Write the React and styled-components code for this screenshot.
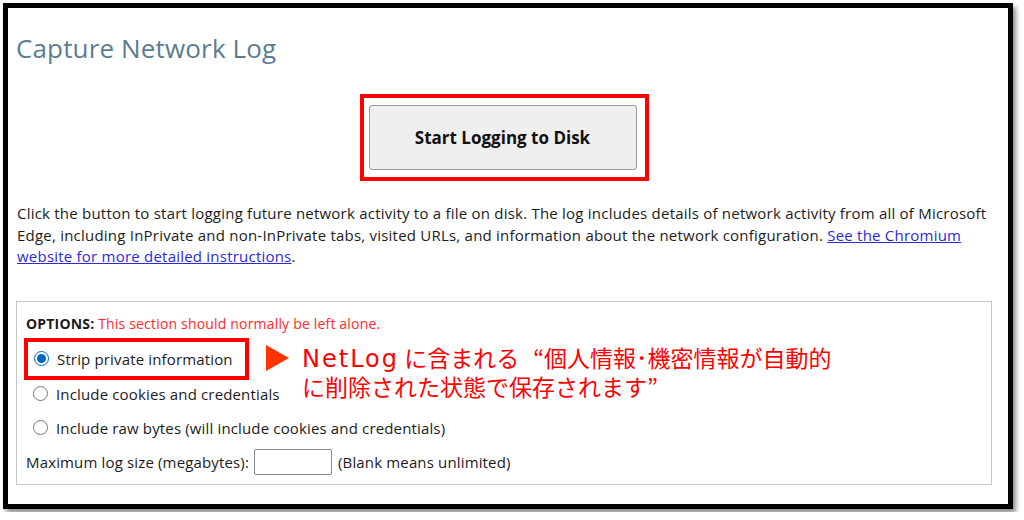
import React from 'react';
import styled, { createGlobalStyle } from 'styled-components';

const GlobalStyle = createGlobalStyle`
  html, body {
    margin: 0;
    padding: 0;
    background: #fff;
  }
  body {
    font-family: "Open Sans", "Noto Sans", "Noto Sans CJK JP", sans-serif;
    color: #1b1b1b;
  }
`;

const Frame = styled.div`
  position: relative;
  box-sizing: border-box;
  margin: 3px;
  width: 1010px;
  height: 506px;
  border: 5px solid #000;
  background: #fff;
  box-shadow: 3px 4px 5px rgba(0, 0, 0, 0.45);
  padding: 0 16px 0 8px;
`;

const Title = styled.h1`
  margin: 23px 0 0 0;
  font-size: 26px;
  line-height: 34px;
  font-weight: 400;
  letter-spacing: 0.15px;
  color: #5b7c93;
`;

const ButtonRow = styled.div`
  display: flex;
  justify-content: center;
  margin-top: 29px;
`;

const Highlight = styled.div`
  display: flex;
  align-items: center;
  box-sizing: border-box;
  border: 4px solid #ff0000;
  padding: ${p => p.pad || '0'};
`;

const BigButton = styled.button`
  width: 268px;
  height: 65px;
  background: #efefef;
  border: 1px solid #9a9a9a;
  border-radius: 3px;
  font-family: "Open Sans", sans-serif;
  font-size: 17px;
  font-weight: 700;
  color: #111;
`;

const Paragraph = styled.p`
  margin: 22px 0 0 1px;
  font-size: 15px;
  line-height: 21.5px;
  letter-spacing: 0.22px;
`;

const Link = styled.a`
  color: #2b2bd9;
  text-decoration: underline;
`;

const Options = styled.div`
  position: relative;
  margin-top: 33px;
  border: 1px solid #c8c8c8;
  height: 184px;
  box-sizing: border-box;
  padding: 12px 9px 0 9px;
`;

const OptionsHead = styled.div`
  font-size: 14px;
  line-height: 20px;
  letter-spacing: 0.18px;
`;

const Strong = styled.b`
  font-weight: 700;
`;

const Warn = styled.span`
  color: #ff2a2a;
`;

const RadioList = styled.div`
  display: flex;
  flex-direction: column;
  margin-top: 4px;
`;

const Row = styled.label`
  display: flex;
  align-items: center;
  gap: 8px;
  height: 34px;
  margin-top: ${p => p.shift || 0}px;
  font-size: 15px;
  letter-spacing: 0.15px;
  box-sizing: border-box;
  padding-left: ${p => (p.boxed ? 0 : 7)}px;
`;

const Radio = styled.input`
  margin: 0;
  width: 15px;
  height: 15px;
  accent-color: #0067c0;
`;

const SizeRow = styled.div`
  display: flex;
  align-items: center;
  gap: 5px;
  height: 34px;
  font-size: 15px;
  letter-spacing: 0.15px;
`;

const SizeInput = styled.input`
  box-sizing: border-box;
  width: 78px;
  height: 26px;
  border: 1px solid #8a8a8a;
  border-radius: 2px;
  margin-right: 1px;
`;

const Note = styled.div`
  position: absolute;
  left: 249px;
  top: 42px;
  display: flex;
  align-items: flex-start;
  gap: 13px;
`;

const Arrow = styled.svg`
  width: 23px;
  height: 26px;
  margin-top: 1px;
`;

const NoteText = styled.div`
  color: #ff0000;
  font-family: "Noto Sans CJK JP", "Noto Sans", sans-serif;
  font-size: 23px;
  line-height: 27px;
  white-space: nowrap;
`;

const Latin = styled.span`
  font-family: "DejaVu Sans", "Noto Sans", sans-serif;
  font-size: 24px;
  letter-spacing: 2px;
`;

const OpenQuote = styled.span`
  margin-left: 14px;
`;

export default function App() {
  return (
    <>
      <GlobalStyle />
      <Frame>
        <Title>Capture Network Log</Title>
        <ButtonRow>
          <Highlight pad="7px 8px 7px 5px">
            <BigButton>Start Logging to Disk</BigButton>
          </Highlight>
        </ButtonRow>
        <Paragraph>
          Click the button to start logging future network activity to a file on disk. The log includes details of
          network activity from all of Microsoft Edge, including InPrivate and non-InPrivate tabs, visited URLs, and
          information about the network configuration.{' '}
          <Link href="#">See the Chromium website for more detailed instructions</Link>.
        </Paragraph>
        <Options>
          <OptionsHead>
            <Strong>OPTIONS:</Strong> <Warn>This section should normally be left alone.</Warn>
          </OptionsHead>
          <RadioList>
            <Highlight pad="0 12px 0 6px" style={{ alignSelf: 'flex-start', marginLeft: -2 }}>
              <Row boxed>
                <Radio type="radio" name="mode" defaultChecked />
                Strip private information
              </Row>
            </Highlight>
            <Row shift={-3}>
              <Radio type="radio" name="mode" />
              Include cookies and credentials
            </Row>
            <Row>
              <Radio type="radio" name="mode" />
              Include raw bytes (will include cookies and credentials)
            </Row>
          </RadioList>
          <SizeRow>
            Maximum log size (megabytes):
            <SizeInput type="text" />
            (Blank means unlimited)
          </SizeRow>
          <Note>
            <Arrow viewBox="0 0 23 26">
              <polygon points="0,0 23,13 0,26" fill="#ff3300" />
            </Arrow>
            <NoteText>
              <Latin>NetLog</Latin> に含まれる<OpenQuote>“</OpenQuote>個人情報･機密情報が自動的
              <br />
              に削除された状態で保存されます”
            </NoteText>
          </Note>
        </Options>
      </Frame>
    </>
  );
}
